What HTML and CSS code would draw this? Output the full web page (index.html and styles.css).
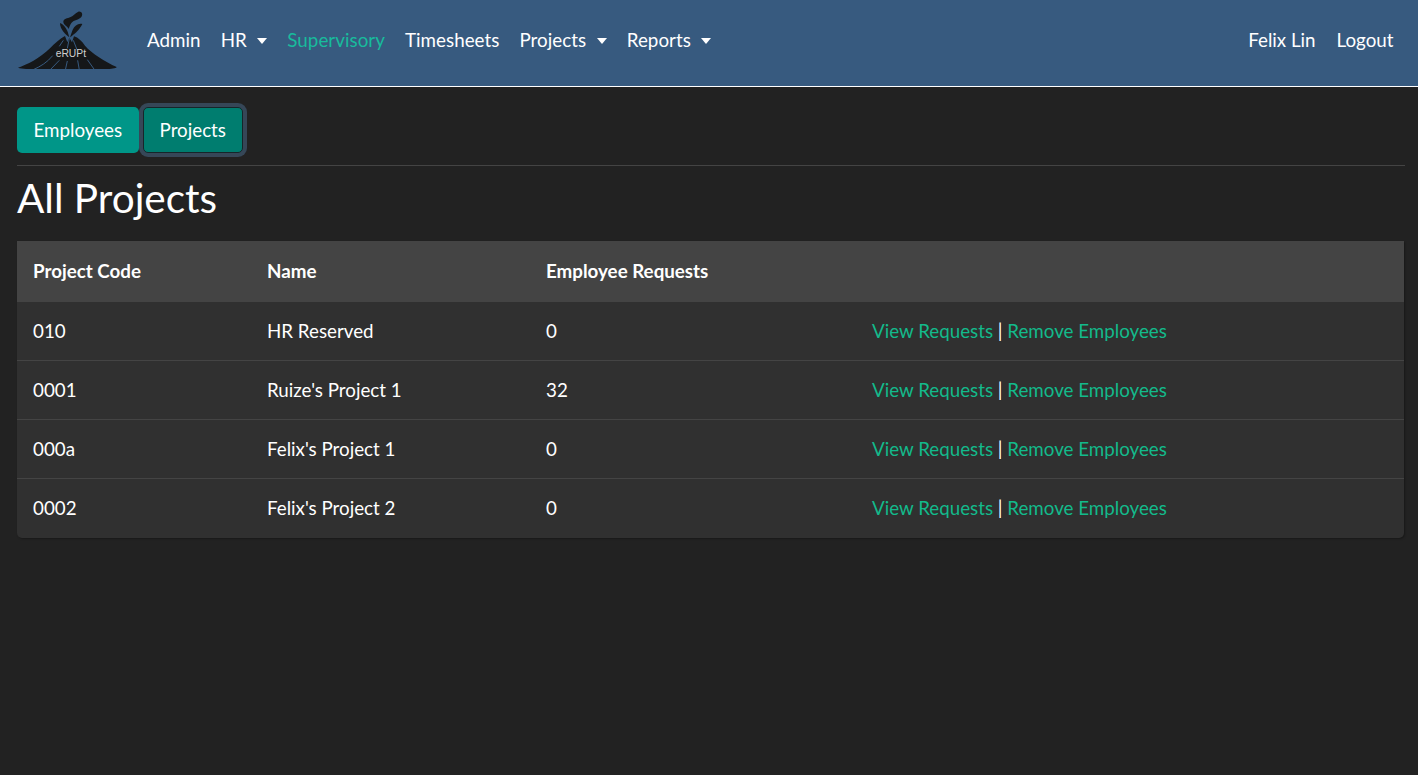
FILE: index.html
```html
<!DOCTYPE html>
<html lang="en">
<head>
<meta charset="utf-8">
<title>All Projects</title>
<link rel="stylesheet" href="styles.css">
</head>
<body>
<nav class="navbar">
  <a class="brand" href="#" aria-label="eRUPt">
    <svg class="logo" width="115" height="70" viewBox="0 0 345 210">
      <path class="logo-ink" d="M205 20 C215 18 220 28 214 36 C206 46 192 44 184 54 C180 60 178 66 176 72 C172 62 160 60 160 50 C160 42 172 40 182 36 C190 32 196 24 205 20 Z"/>
      <path class="logo-ink" d="M150 54 C158 56 168 68 173 80 L178 97 C168 90 150 74 150 54 Z"/>
      <path class="logo-ink" d="M217 57 C204 54 194 62 188 74 L180 97 C192 88 208 76 217 57 Z"/>
      <path class="logo-ink" d="M24 188 C50 180 90 160 120 130 C135 115 150 100 165 93 L172 112 L178 98 L186 112 L192 94 C205 98 215 108 225 122 C245 145 285 170 320 186 C320 191 300 192 290 192 L80 192 C60 192 35 192 24 188 Z"/>
      <path class="logo-gap" d="M178 100 L172 130 M190 106 L201 134 M160 106 L148 124 M70 194 C92 184 112 172 128 152 M120 195 L148 166 M166 195 L172 168 M208 195 L203 166 M254 195 L232 164"/>
      <text class="logo-text" x="137" y="155">eRUPt</text>
    </svg>
  </a>
  <ul class="nav-main">
    <li><a href="#">Admin</a></li>
    <li><a href="#" class="caret">HR</a></li>
    <li><a href="#" class="active">Supervisory</a></li>
    <li><a href="#">Timesheets</a></li>
    <li><a href="#" class="caret">Projects</a></li>
    <li><a href="#" class="caret">Reports</a></li>
  </ul>
  <ul class="nav-user">
    <li><a href="#">Felix Lin</a></li>
    <li><a href="#">Logout</a></li>
  </ul>
</nav>
<main class="content">
  <div class="tabs">
    <a href="#" class="btn">Employees</a>
    <a href="#" class="btn btn-focus">Projects</a>
  </div>
  <hr class="rule">
  <h1 class="title">All Projects</h1>
  <div class="card">
    <table class="table">
      <colgroup>
        <col class="c1"><col class="c2"><col class="c3"><col class="c4">
      </colgroup>
      <thead>
        <tr><th>Project Code</th><th>Name</th><th>Employee Requests</th><th></th></tr>
      </thead>
      <tbody>
        <tr><td>010</td><td>HR Reserved</td><td>0</td><td><a href="#">View Requests</a> | <a href="#">Remove Employees</a></td></tr>
        <tr><td>0001</td><td>Ruize's Project 1</td><td>32</td><td><a href="#">View Requests</a> | <a href="#">Remove Employees</a></td></tr>
        <tr><td>000a</td><td>Felix's Project 1</td><td>0</td><td><a href="#">View Requests</a> | <a href="#">Remove Employees</a></td></tr>
        <tr><td>0002</td><td>Felix's Project 2</td><td>0</td><td><a href="#">View Requests</a> | <a href="#">Remove Employees</a></td></tr>
      </tbody>
    </table>
  </div>
</main>
</body>
</html>
```
FILE: styles.css
```css
* { box-sizing: border-box; }
html, body { margin: 0; padding: 0; }
body {
  background: #222;
  color: #fff;
  font-family: Lato, "Liberation Sans", sans-serif;
  font-size: 18.75px;
  line-height: 28px;
  min-height: 775px;
}
a { text-decoration: none; }
ul { list-style: none; margin: 0; padding: 0; }

.navbar {
  display: flex;
  align-items: flex-start;
  height: 87px;
  background: #375a7f;
  border-bottom: 1px solid #fff;
  padding: 5px 10px 0;
}
.brand { display: block; height: 70px; margin-right: 12px; }
.logo { display: block; }
.logo-ink { fill: #151719; }
.logo-gap { fill: none; stroke: #375a7f; stroke-width: 3; }
.logo-text { fill: #d0d0d0; font-family: "Liberation Sans", sans-serif; font-size: 31px; }

.nav-main, .nav-user { display: flex; padding-top: 16px; }
.nav-main { letter-spacing: .05px; }
.nav-user { margin-left: auto; margin-right: 4px; }
.nav-main a, .nav-user a {
  color: #fff;
  display: block;
  padding: 5px 10px;
}
.nav-main a.active { color: #18bc9c; }
.caret::after {
  content: "";
  display: inline-block;
  margin-left: 10.5px;
  vertical-align: 3px;
  border-top: 6px solid #fff;
  border-left: 5.5px solid transparent;
  border-right: 5.5px solid transparent;
}
.nav-user a { padding: 5px 10.5px; }

.content { padding: 20px 13px 0 17px; }
.tabs { display: flex; gap: 4px; }
.btn {
  display: block;
  height: 46px;
  padding: 9px 16.5px;
  background: #009688;
  color: #fff;
  border-radius: 5px;
}
.btn-focus {
  background: #007d6f;
  border: 1px solid #17252a;
  padding: 8px 16px;
  box-shadow: 0 0 0 4px #364758;
}
.rule {
  border: 0;
  border-top: 1px solid #444;
  margin: 12px 0 0;
}
.title {
  font-size: 40.5px;
  font-weight: 400;
  line-height: 48px;
  margin: 8px 0 19px;
}
.card {
  background: #303030;
  border-radius: 0 0 5px 5px;
  margin-right: 1px;
  box-shadow: 1px 1px 2px rgba(0,0,0,.3);
}
.table { width: 100%; border-collapse: collapse; table-layout: fixed; }
.c1 { width: 234px; }
.c2 { width: 279px; }
.c3 { width: 326px; }
th, td { text-align: left; padding: 0 16px; }
th {
  background: #444;
  height: 61px;
  padding-bottom: 2px;
  font-weight: 700;
}
td {
  height: 59px;
  border-top: 1px solid #444;
}
tbody tr:first-child td { border-top: 0; height: 58px; }
tbody tr:last-child td { height: 60px; }
td a { color: #13ba8b; }
```
